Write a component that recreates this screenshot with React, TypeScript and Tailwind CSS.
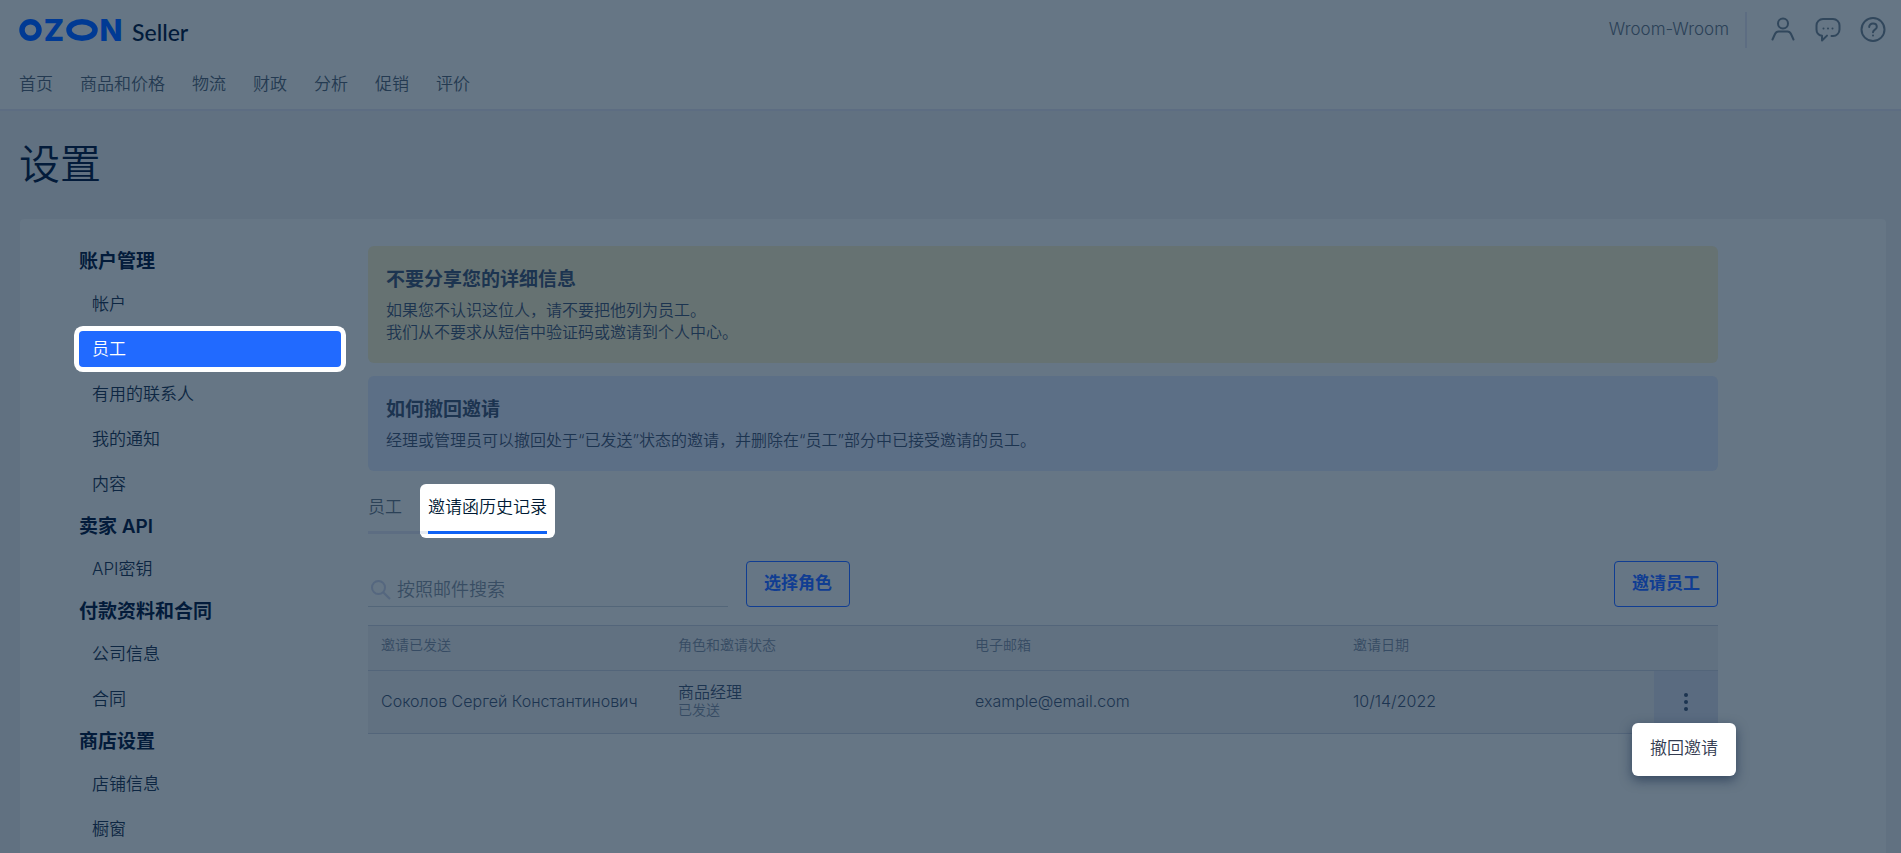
import { clsx } from 'clsx'

const navLinks = ['首页', '商品和价格', '物流', '财政', '分析', '促销', '评价']

const menu = [
  { title: '账户管理', items: ['帐户', '员工', '有用的联系人', '我的通知', '内容'] },
  { title: '卖家 API', items: ['API密钥'] },
  { title: '付款资料和合同', items: ['公司信息', '合同'] },
  { title: '商店设置', items: ['店铺信息', '橱窗'] },
]

const invites = [
  {
    name: 'Соколов Сергей Константинович',
    role: '商品经理',
    status: '已发送',
    email: 'example@email.com',
    date: '10/14/2022',
  },
]

function Logo() {
  return (
    <svg viewBox="0 0 104 40" className="h-10 w-[104px]" role="img" aria-label="OZON">
      <g fill="none" stroke="#003a94" strokeWidth="5.5">
        <ellipse cx="11.500" cy="20" rx="8.500" ry="8.3" />
        <ellipse cx="63" cy="20" rx="13" ry="8.3" />
      </g>
      <g fill="#003a94" fontSize="30" fontWeight="800" textAnchor="middle">
        <text x="35" y="31">
          Z
        </text>
        <text x="92" y="31">
          N
        </text>
      </g>
    </svg>
  )
}

function UserIcon() {
  return (
    <svg viewBox="0 0 26 26" className="size-[26px]" fill="none" stroke="currentColor" strokeWidth="2" strokeLinecap="round" strokeLinejoin="round">
      <circle cx="13" cy="6.500" r="5" />
      <path d="M2.500 22.500 5 17C5.700 15.500 6.800 14.500 8.600 14.500h8.800c1.800 0 2.900 1 3.600 2.500l2.500 5.500" />
    </svg>
  )
}

function ChatIcon() {
  return (
    <svg viewBox="0 0 26 26" className="size-[26px]" fill="none" stroke="currentColor" strokeWidth="2" strokeLinecap="round" strokeLinejoin="round">
      <path d="M16.500 19h1.500a6.500 6.500 0 0 0 6.500-6.500V8.500A6.500 6.500 0 0 0 18 2H8a6.500 6.500 0 0 0-6.500 6.500v4c0 3.100 2.200 5.700 5.500 6.300v4.700l5-4.900" />
      <path d="M8.500 11.500h.01M13 11.500h.01M17.500 11.500h.01" />
    </svg>
  )
}

function HelpIcon() {
  return (
    <svg viewBox="0 0 26 26" className="size-[26px]" fill="none" stroke="currentColor" strokeWidth="2" strokeLinecap="round" strokeLinejoin="round">
      <circle cx="13" cy="12.500" r="11.500" />
      <path d="M9.200 10.100C9.200 7.900 10.800 6.500 13 6.500s3.800 1.400 3.800 3.400c0 2.700-3.800 2.800-3.800 5.300" />
      <path d="M13 18.400h.01" />
    </svg>
  )
}

function Header() {
  return (
    <header className="border-b-2 border-[#5d6d82] bg-[#667685] pr-[15px] pl-[19px]">
      <div className="flex h-[60px] items-start justify-between">
        <a href="#" className="flex items-center gap-[9px] pt-2.5">
          <Logo />
          <span className="pt-1 font-[Lato] text-[23px] leading-8 font-medium text-[#021b3a]">Seller</span>
        </a>
        <div className="flex items-center pt-3">
          <span className="text-[17px] text-[#2b4157]">Wroom-Wroom</span>
          <span className="ml-4 h-9 w-0.5 bg-[#5d6d82]" />
          <div className="ml-[23px] flex items-center gap-[19px] text-[#31475c]">
            <button type="button" aria-label="Профиль">
              <UserIcon />
            </button>
            <button type="button" aria-label="Чат">
              <ChatIcon />
            </button>
            <button type="button" aria-label="Помощь">
              <HelpIcon />
            </button>
          </div>
        </div>
      </div>
      <nav className="flex h-[49px] items-center gap-[27px] text-[17px] text-[#243a51]">
        {navLinks.map((link) => (
          <a key={link} href="#">
            {link}
          </a>
        ))}
      </nav>
    </header>
  )
}

function Sidebar() {
  return (
    <aside className="flex w-[262px] shrink-0 flex-col gap-3 pt-[30px]">
      {menu.map((group) => (
        <section key={group.title}>
          <h2 className="mb-3 text-[19px] leading-[25px] font-semibold text-[#031b3a]">{group.title}</h2>
          <ul className="flex flex-col gap-[9px]">
            {group.items.map((item) => (
              <li key={item}>
                <a
                  href="#"
                  className={clsx(
                    'flex h-9 items-center rounded px-[13px] pt-0.5 text-[17px]',
                    item === '员工'
                      ? 'bg-[#216aff] text-white ring-[5px] ring-white'
                      : 'text-[#0d2642]',
                  )}
                >
                  {item}
                </a>
              </li>
            ))}
          </ul>
        </section>
      ))}
    </aside>
  )
}

function Alerts() {
  return (
    <div className="flex flex-col gap-[13px] text-[#1c3450]">
      <div className="rounded-md bg-[#667272] px-[18px] pt-5 pb-5">
        <h3 className="mb-[5px] text-[19px] leading-7 font-bold">不要分享您的详细信息</h3>
        <p className="text-base leading-[22px]">
          如果您不认识这位人，请不要把他列为员工。
          <br />
          我们从不要求从短信中验证码或邀请到个人中心。
        </p>
      </div>
      <div className="rounded-md bg-[#5c6f86] px-[18px] pt-5 pb-5">
        <h3 className="mb-[5px] text-[19px] leading-7 font-bold">如何撤回邀请</h3>
        <p className="text-base leading-[22px]">
          经理或管理员可以撤回处于“已发送”状态的邀请，并删除在“员工”部分中已接受邀请的员工。
        </p>
      </div>
    </div>
  )
}

function Tabs() {
  return (
    <div className="mt-[13px] flex text-[17px]">
      <div className="flex w-[52px] flex-col justify-between pb-1">
        <button type="button" className="h-[47px] text-left text-[#2b4157]">
          员工
        </button>
        <div className="h-[3px] bg-[#5d6d82]" />
      </div>
      <div className="flex flex-col justify-between rounded-md bg-white pb-1">
        <button type="button" className="h-[47px] px-2 text-[#001a34]">
          邀请函历史记录
        </button>
        <div className="flex h-[3px] pr-2">
          <div className="w-2 bg-[#e6ebf2]" />
          <div className="flex-1 bg-[#0f62f5]" />
        </div>
      </div>
    </div>
  )
}

function Toolbar() {
  return (
    <div className="mt-[23px] flex items-end">
      <label className="flex h-[37px] w-[360px] items-center border-b border-[#536679] pt-1 pl-[3px]">
        <svg viewBox="0 0 20 20" className="size-5 text-[#55677f]" fill="none" stroke="currentColor" strokeWidth="2">
          <circle cx="7.500" cy="7.500" r="6.500" />
          <path d="m12.200 12.200 6.800 6.800" />
        </svg>
        <input
          type="text"
          aria-label="按照邮件搜索"
          placeholder="按照邮件搜索"
          className="ml-1.5 min-w-0 flex-1 bg-transparent text-lg text-[#20384f] outline-none placeholder:text-[#384d63]"
        />
      </label>
      <button type="button" className="ml-[18px] h-[46px] rounded border border-[#103d92] px-[17px] text-[17px] font-bold text-[#103d92]">
        选择角色
      </button>
      <button type="button" className="ml-auto h-[46px] rounded border border-[#103d92] px-[17px] text-[17px] font-bold text-[#103d92]">
        邀请员工
      </button>
    </div>
  )
}

function InvitesTable() {
  return (
    <table className="mt-[18px] w-full table-fixed border-collapse bg-[#617181] text-left">
      <thead>
        <tr className="h-[45px] border-y border-[#53657a] text-sm text-[#364b63]">
          <th className="w-[22%] px-[13px] pb-1.5 font-[350]">邀请已发送</th>
          <th className="w-[22%] px-[13px] pb-1.5 font-[350]">角色和邀请状态</th>
          <th className="w-[28%] px-[13px] pb-1.5 font-[350]">电子邮箱</th>
          <th className="px-[13px] pb-1.5 font-[350]">邀请日期</th>
          <th className="w-16" />
        </tr>
      </thead>
      <tbody>
        {invites.map((invite) => (
          <tr key={invite.email} className="h-[63px] border-b border-[#53657a] text-base text-[#1c3450]">
            <td className="px-[13px] pb-0.5 whitespace-nowrap">{invite.name}</td>
            <td className="px-[13px] pb-0.5">
              <div className="leading-[18px]">{invite.role}</div>
              <div className="text-sm leading-[18px] text-[#364b63]">{invite.status}</div>
            </td>
            <td className="px-[13px] pb-0.5">{invite.email}</td>
            <td className="px-[13px] pb-0.5">{invite.date}</td>
            <td className="relative bg-[#5a6b80] p-0">
              <button type="button" aria-label="更多" className="flex h-[62px] w-full flex-col items-center justify-center gap-[3px]">
                <span className="size-1 rounded-full bg-[#1c3450]" />
                <span className="size-1 rounded-full bg-[#1c3450]" />
                <span className="size-1 rounded-full bg-[#1c3450]" />
              </button>
              <div className="absolute top-[52px] -right-[18px] rounded-md bg-white shadow-[0_4px_12px_rgba(20,40,70,0.6)]">
                <button type="button" className="h-[53px] px-[18px] pb-0.5 text-[17px] whitespace-nowrap text-[#333b50]">
                  撤回邀请
                </button>
              </div>
            </td>
          </tr>
        ))}
      </tbody>
    </table>
  )
}

export default function App() {
  return (
    <div className="flex min-h-screen flex-col bg-[#617181] font-[Inter,'Noto_Sans_CJK_SC',sans-serif] font-[350]">
      <Header />
      <h1 className="pt-[23px] pb-[25px] pl-[19px] text-[41px] leading-[60px] text-[#031b3a]">设置</h1>
      <main className="mr-[15px] ml-5 flex flex-1 gap-[27px] rounded-t bg-[#667685] pr-[168px] pl-[59px]">
        <Sidebar />
        <div className="min-w-0 flex-1 pt-[27px]">
          <Alerts />
          <Tabs />
          <Toolbar />
          <InvitesTable />
        </div>
      </main>
    </div>
  )
}
